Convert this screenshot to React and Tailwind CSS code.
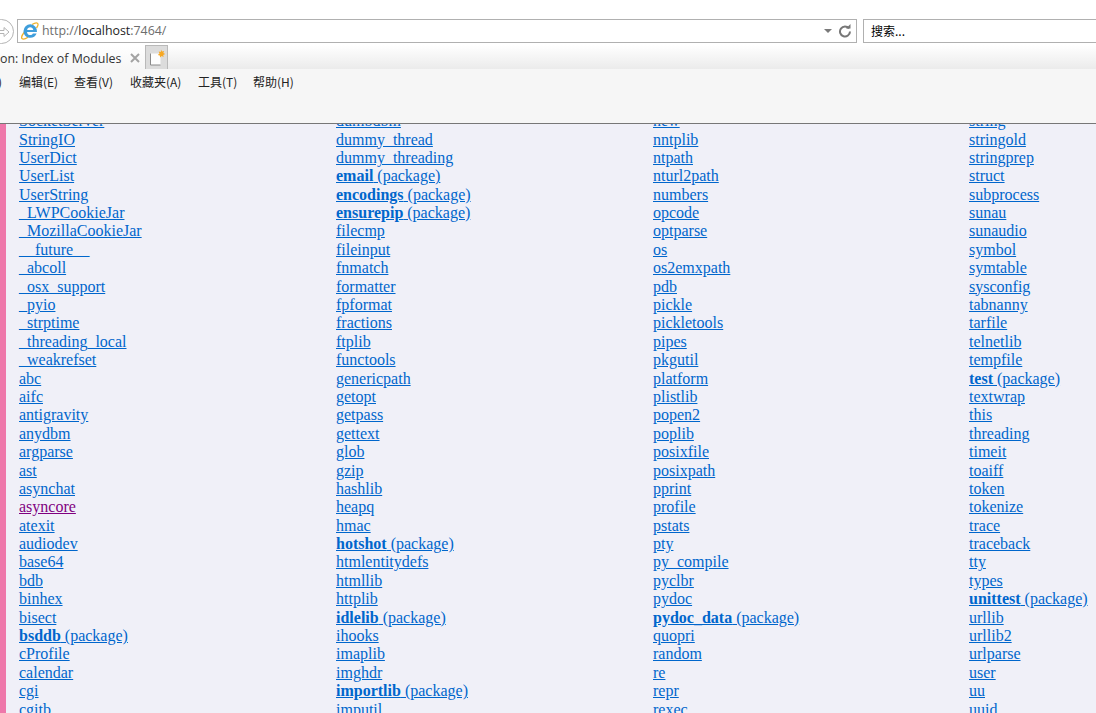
const pkg = (name) => ({ name, pkg: true });

const columns = [
	["SocketServer", "StringIO", "UserDict", "UserList", "UserString", "_LWPCookieJar", "_MozillaCookieJar", "__future__", "_abcoll", "_osx_support", "_pyio", "_strptime", "_threading_local", "_weakrefset", "abc", "aifc", "antigravity", "anydbm", "argparse", "ast", "asynchat", "asyncore", "atexit", "audiodev", "base64", "bdb", "binhex", "bisect", pkg("bsddb"), "cProfile", "calendar", "cgi", "cgitb"],
	["dumbdbm", "dummy_thread", "dummy_threading", pkg("email"), pkg("encodings"), pkg("ensurepip"), "filecmp", "fileinput", "fnmatch", "formatter", "fpformat", "fractions", "ftplib", "functools", "genericpath", "getopt", "getpass", "gettext", "glob", "gzip", "hashlib", "heapq", "hmac", pkg("hotshot"), "htmlentitydefs", "htmllib", "httplib", pkg("idlelib"), "ihooks", "imaplib", "imghdr", pkg("importlib"), "imputil"],
	["new", "nntplib", "ntpath", "nturl2path", "numbers", "opcode", "optparse", "os", "os2emxpath", "pdb", "pickle", "pickletools", "pipes", "pkgutil", "platform", "plistlib", "popen2", "poplib", "posixfile", "posixpath", "pprint", "profile", "pstats", "pty", "py_compile", "pyclbr", "pydoc", pkg("pydoc_data"), "quopri", "random", "re", "repr", "rexec"],
	["string", "stringold", "stringprep", "struct", "subprocess", "sunau", "sunaudio", "symbol", "symtable", "sysconfig", "tabnanny", "tarfile", "telnetlib", "tempfile", pkg("test"), "textwrap", "this", "threading", "timeit", "toaiff", "token", "tokenize", "trace", "traceback", "tty", "types", pkg("unittest"), "urllib", "urllib2", "urlparse", "user", "uu", "uuid"],
];

const menus = ["编辑(E)", "查看(V)", "收藏夹(A)", "工具(T)", "帮助(H)"];

function IeLogo() {
	return (
		<svg width="18" height="18" viewBox="0 0 18 18" fill="none">
			<path d="M3.500 10C1 13 .2 15.500 1 16.500c1 1 3.500.3 6-1.300" stroke="#efb22c" strokeWidth="1.300" />
			<path d="M11 2.500C13.500 1 15.800.6 16.600 1.400c.8.8.2 2.800-1.100 4.600" stroke="#efb22c" strokeWidth="1.300" />
			<path d="M9.500 2.300A6.800 6.800 0 0 0 2.500 9c0 4 3 6.800 6.800 6.800 3 0 5.300-1.600 6.300-4.300h-3.700c-.6 1-1.500 1.500-2.700 1.500-1.800 0-3.100-1.200-3.200-3.100h10A6.900 6.900 0 0 0 9.500 2.300ZM6.100 7.900C6.400 6.400 7.700 5.300 9.200 5.300c1.600 0 2.800 1 3.100 2.600H6.100Z" fill="#3f9edb" />
		</svg>
	);
}

function ModuleLink({ item }) {
	const name = typeof item === "string" ? item : item.name;
	const color = name === "asyncore" ? "text-[#800080]" : "text-[#0066cc]";
	return (
		<div className="h-[18.4px] leading-[18.4px] whitespace-nowrap">
			<a href="#" className={`underline ${color}`}>
				{item.pkg ? (
					<>
						<strong>{name}</strong> (package)
					</>
				) : (
					name
				)}
			</a>
		</div>
	);
}

export default function App() {
	return (
		<div className="h-[713px] w-[1096px] overflow-hidden flex flex-col bg-white">
			<div className="shrink-0 h-[45px] pt-[19px] flex items-start bg-white font-['Open_Sans',sans-serif]">
				<div className="-ml-[12px] w-[26px] h-[25px] shrink-0 rounded-full border border-[#b4b4b4] bg-white flex items-center justify-end pr-[3px]">
					<svg width="11" height="12" viewBox="0 0 11 12" fill="none" stroke="#b4b4b4" strokeWidth="1">
						<path d="M.5 4.500h4.500V1.500L10 6 5 10.500V7.500H.5Z" />
					</svg>
				</div>
				<div className="ml-[3px] w-[840px] h-[24px] shrink-0 border border-[#b0b0b0] flex items-center pl-[3px] pr-[3px]">
					<IeLogo />
					<span className="ml-[3px] text-[12.4px] text-[#6d6d6d]">
						http://<span className="text-[#1e1e1e]">localhost</span>:7464/
					</span>
					<svg className="ml-auto" width="10" height="6" viewBox="0 0 10 6">
						<path d="M1 1h8L5 5Z" fill="#7a7a7a" />
					</svg>
					<svg className="ml-[5px] mr-[1px]" width="14" height="14" viewBox="0 0 14 14" fill="none">
						<path d="M11 4.500A5 5 0 1 0 12 7.500" stroke="#777777" strokeWidth="2" />
						<path d="M8 4.500h4.500V0Z" fill="#777777" />
					</svg>
				</div>
				<div className="ml-[6px] flex-1 h-[24px] border border-[#b0b0b0] border-r-0 flex items-center pl-[7px] text-[12px] text-black font-['Noto_Sans_CJK_SC',sans-serif]">
					搜索...
				</div>
			</div>

			<div className="shrink-0 h-[24px] flex bg-gradient-to-b from-white to-[#ebebeb] font-['Open_Sans',sans-serif]">
				<div className="w-[145px] shrink-0 bg-gradient-to-b from-white to-[#f6f6f6] flex items-center justify-between pr-[5px] text-[12.4px] text-[#333333] whitespace-nowrap">
					<span className="mt-[5px]">on: Index of Modules</span>
					<svg className="mt-[2px]" width="10" height="10" viewBox="0 0 10 10" stroke="#a3a3a3" strokeWidth="2">
						<path d="M1 1l8 8M9 1l-8 8" />
					</svg>
				</div>
				<div className="w-[23px] shrink-0 border border-b-0 border-[#b9b9b9] bg-[#dcdcdc] flex items-center justify-center">
					<svg width="18" height="18" viewBox="0 0 18 18" fill="none">
						<path d="M2.500 4.500h10V16h-10Z" fill="#fdfdfd" />
						<path d="M2.500 4.500V16h10" stroke="#8a8a8a" />
						<path d="M13 .5l1 2 2.200-.6-.9 2.100 1.900 1-2 .9.400 2.200-2-1-1.500 1.500-.3-2.200-2-.5 1.700-1.300-.8-2.100 2.100.5Z" fill="#f7a823" />
					</svg>
				</div>
			</div>

			<div className="shrink-0 h-[55px] bg-[#f6f6f6] border-b border-[#777777] pl-[19px] pt-[4px] font-['Noto_Sans_CJK_SC',sans-serif] relative">
				<div className="flex text-[12px] leading-[18px] text-[#222222]">
					<span className="w-[55px]">{menus[0]}</span>
					<span className="w-[56px]">{menus[1]}</span>
					<span className="w-[68px]">{menus[2]}</span>
					<span className="w-[55px]">{menus[3]}</span>
					<span>{menus[4]}</span>
				</div>
				<span className="absolute left-[-2px] top-[4px] text-[12px] leading-[18px] text-[#222222]">)</span>
			</div>

			<div className="flex-1 min-h-0 overflow-hidden bg-[#f0f0f8] flex font-['Liberation_Serif',serif] text-[16px]">
				<div className="w-[6px] shrink-0 bg-[#ee77aa]" />
				<div className="flex-1 -mt-[11.9px] ml-[13px] grid grid-cols-[317px_317px_316px_1fr] content-start">
					{columns.map((col, i) => (
						<div key={i}>
							{col.map((item, j) => (
								<ModuleLink key={j} item={item} />
							))}
						</div>
					))}
				</div>
			</div>
		</div>
	);
}
